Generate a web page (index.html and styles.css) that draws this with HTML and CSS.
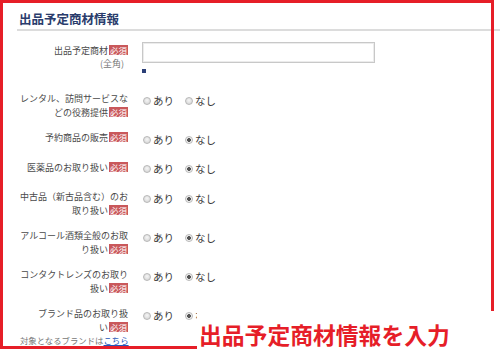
FILE: index.html
```html
<!DOCTYPE html>
<html lang="ja">
<head>
  <meta charset="UTF-8">
  <meta name="viewport" content="width=device-width, initial-scale=1">
  <title>出品予定商材情報</title>
  <link rel="stylesheet" href="styles.css">
</head>
<body>
  <div class="page">
    <h2 class="section-title">出品予定商材情報</h2>

    <div class="form">
      <div class="row row-input">
        <div class="label">
          <span class="line">出品予定商材<span class="req">必須</span></span>
          <span class="line sub">(全角)</span>
        </div>
        <div class="field">
          <input type="text" class="text-input">
          <span class="counter"></span>
        </div>
      </div>

      <div class="row">
        <div class="label">
          <span class="line">レンタル、訪問サービスな</span>
          <span class="line">どの役務提供<span class="req">必須</span></span>
        </div>
        <div class="radios">
          <label class="radio"><span class="dot"></span>あり</label>
          <label class="radio"><span class="dot"></span>なし</label>
        </div>
      </div>

      <div class="row">
        <div class="label">
          <span class="line">予約商品の販売<span class="req">必須</span></span>
        </div>
        <div class="radios">
          <label class="radio"><span class="dot"></span>あり</label>
          <label class="radio"><span class="dot on"></span>なし</label>
        </div>
      </div>

      <div class="row">
        <div class="label">
          <span class="line">医薬品のお取り扱い<span class="req">必須</span></span>
        </div>
        <div class="radios">
          <label class="radio"><span class="dot"></span>あり</label>
          <label class="radio"><span class="dot on"></span>なし</label>
        </div>
      </div>

      <div class="row">
        <div class="label">
          <span class="line">中古品（新古品含む）のお</span>
          <span class="line">取り扱い<span class="req">必須</span></span>
        </div>
        <div class="radios">
          <label class="radio"><span class="dot"></span>あり</label>
          <label class="radio"><span class="dot on"></span>なし</label>
        </div>
      </div>

      <div class="row">
        <div class="label">
          <span class="line">アルコール酒類全般のお取</span>
          <span class="line">り扱い<span class="req">必須</span></span>
        </div>
        <div class="radios">
          <label class="radio"><span class="dot"></span>あり</label>
          <label class="radio"><span class="dot on"></span>なし</label>
        </div>
      </div>

      <div class="row">
        <div class="label">
          <span class="line">コンタクトレンズのお取り</span>
          <span class="line">扱い<span class="req">必須</span></span>
        </div>
        <div class="radios">
          <label class="radio"><span class="dot"></span>あり</label>
          <label class="radio"><span class="dot on"></span>なし</label>
        </div>
      </div>

      <div class="row">
        <div class="label">
          <span class="line">ブランド品のお取り扱</span>
          <span class="line">い<span class="req">必須</span></span>
          <span class="line note">対象となるブランドは<a href="#">こちら</a></span>
        </div>
        <div class="radios">
          <label class="radio"><span class="dot"></span>あり</label>
          <label class="radio"><span class="dot on"></span>なし</label>
        </div>
      </div>
    </div>

    <!-- annotation overlay -->
    <div class="frame"></div>
    <div class="caption">出品予定商材情報を入力</div>
  </div>
</body>
</html>
```

FILE: styles.css
```css
* {
  box-sizing: border-box;
}

body {
  margin: 0;
  background: #fff;
  font-family: "Noto Sans CJK JP", sans-serif;
  color: #4a4a4a;
}

.page {
  position: relative;
  width: 500px;
  height: 350px;
  overflow: hidden;
  padding-left: 17px;
}

.section-title {
  margin: 0;
  padding: 12px 0 3px 2px;
  font-size: 12.5px;
  line-height: 14px;
  font-weight: bold;
  color: #2a3c6c;
  border-bottom: 2px solid #dcdcdc;
}

.form {
  padding: 5px 0 0 3px;
}

.row {
  display: flex;
  align-items: flex-start;
  padding: 6px 0;
}

.row-input {
  padding-bottom: 13px;
}

.label {
  width: 108px;
  flex-shrink: 0;
  text-align: right;
  font-size: 9px;
  line-height: 13.5px;
  color: #4a4a4a;
}

.line {
  display: block;
  white-space: nowrap;
}

.row-input .label {
  padding-top: 1.5px;
}

.req {
  display: inline-block;
  margin-left: 1px;
  padding: 0 1px;
  background: #c9585b;
  color: #fff;
  font-size: 8.5px;
  line-height: 10px;
}

.sub {
  padding-right: 4px;
  color: #777;
}

.note {
  font-size: 8.4px;
  line-height: 12px;
  color: #777;
}

.note a {
  color: #2456b8;
  text-decoration: underline;
}

.field {
  margin-left: 14px;
  display: flex;
  flex-direction: column;
}

.text-input {
  width: 233px;
  height: 21px;
  margin: 0;
  border: 1px solid #c8c8c8;
  box-shadow: inset 0 0 0 1px #ececec;
  background: #fff;
}

.counter {
  width: 4px;
  height: 4px;
  margin-top: 6px;
  background: #2b3f77;
}

.radios {
  display: flex;
  gap: 11px;
  margin-left: 15px;
  min-height: 17.5px;
  font-size: 10.5px;
  line-height: 16px;
  color: #3a3a3a;
}

.radio {
  display: flex;
  align-items: center;
  gap: 2px;
}

.dot {
  width: 8px;
  height: 8px;
  border-radius: 50%;
  border: 1px solid #b8b8b8;
  background: radial-gradient(circle at 50% 40%, #f6f6f6, #cfcfcf);
}

.dot.on {
  background: radial-gradient(circle, #555 0 1.6px, #f2f2f2 2.2px);
}

.frame {
  position: absolute;
  left: 0;
  top: 0;
  width: 494px;
  height: 349px;
  border: 3px solid #e61e28;
}

.caption {
  position: absolute;
  left: 197px;
  top: 311px;
  right: 0;
  bottom: 0;
  padding: 12px 0 0 2px;
  background: #fff;
  color: #e61e28;
  font-size: 22.8px;
  line-height: 23px;
  font-weight: bold;
  white-space: nowrap;
}
```
